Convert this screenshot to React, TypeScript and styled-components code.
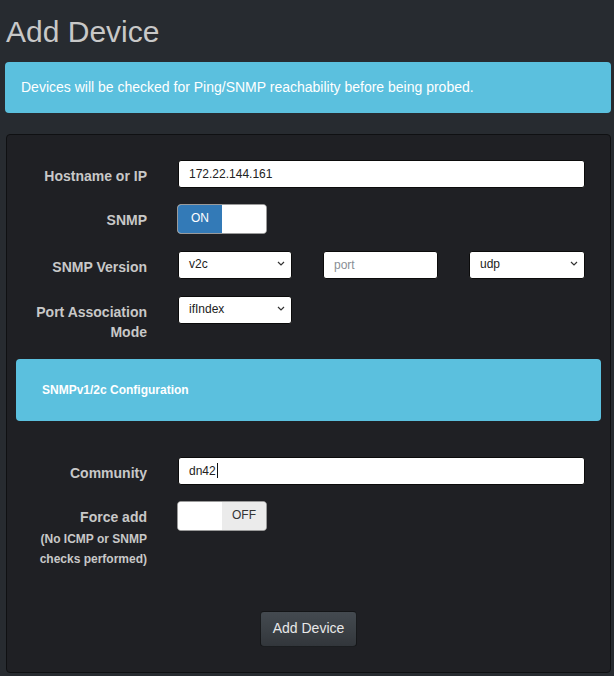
import styled, { createGlobalStyle } from "styled-components";

const GlobalStyle = createGlobalStyle`
  body {
    margin: 0;
    background-color: #272b30;
    font-family: "Liberation Sans", Arial, sans-serif;
    color: #c8c8c8;
  }
`;

const ScPage = styled.div`
  padding: 15px 3px 0 5px;
  width: 606px;
`;

const ScTitle = styled.h1`
  margin: 0 0 14px 1px;
  font-size: 30px;
  line-height: 33px;
  font-weight: normal;
  color: #c8c8c8;
`;

const ScAlert = styled.div`
  margin-bottom: 21px;
  padding: 15px 16px 16px;
  background-color: #5bc0de;
  border-radius: 4px;
  color: #fff;
  font-size: 14px;
  line-height: 20px;
`;

const ScPanel = styled.div`
  margin-left: 1px;
  width: 603px;
  padding: 25px 0;
  background-color: #1f2024;
  border: 1px solid #0f1012;
  border-radius: 4px;
`;

const ScRow = styled.div<{ $space: number }>`
  display: flex;
  align-items: flex-start;
  margin-bottom: ${(p) => p.$space}px;
`;

const ScLabel = styled.div`
  width: 140px;
  padding: 6px 1px 0 0;
  text-align: right;
  font-size: 14px;
  font-weight: bold;
  line-height: 20px;
  color: #c8c8c8;
`;

const ScHint = styled.div`
  margin-top: 2px;
  font-size: 12px;
`;

const ScField = styled.div`
  margin-left: 30px;
  width: 407px;
`;

const ScTriple = styled.div`
  display: grid;
  grid-template-columns: 114px 115px 116px;
  column-gap: 31px;
`;

const ScTextBox = styled.div<{ $muted?: boolean }>`
  display: flex;
  align-items: center;
  box-sizing: border-box;
  height: 28px;
  padding: 0 10px 1px;
  background-color: #fff;
  border: 1px solid #0b0b0b;
  border-radius: 3px;
  font-size: 12px;
  color: ${(p) => (p.$muted ? "#8a8f96" : "#222")};
`;

const ScCaret = styled.span`
  display: inline-block;
  width: 1px;
  height: 15px;
  margin-left: 1px;
  background-color: #111;
`;

const ScSelect = styled(ScTextBox)<{ $width?: number }>`
  justify-content: space-between;
  width: ${(p) => (p.$width ? `${p.$width}px` : "auto")};
  padding-right: 6px;
  padding-bottom: 3px;
`;

const ScToggle = styled.div`
  display: flex;
  box-sizing: border-box;
  width: 90px;
  height: 30px;
  margin-left: -1px;
  border: 1px solid #9a9a9a;
  border-radius: 4px;
  overflow: hidden;
  background-color: #fff;
`;

const ScToggleHalf = styled.div<{ $tone: "on" | "off" | "blank" }>`
  flex: 1;
  display: flex;
  align-items: center;
  justify-content: center;
  padding-bottom: 3px;
  font-size: 12px;
  background-color: ${(p) =>
    p.$tone === "on" ? "#337ab7" : p.$tone === "off" ? "#ebebeb" : "#fff"};
  color: ${(p) => (p.$tone === "on" ? "#fff" : "#333")};
`;

const ScSubPanel = styled.div`
  display: flex;
  align-items: center;
  height: 62px;
  margin: 0 9px 36px;
  padding: 0 26px;
  background-color: #5bc0de;
  border-radius: 4px;
  color: #fff;
  font-size: 12px;
  font-weight: bold;
`;

const ScActions = styled.div`
  display: flex;
  justify-content: center;
`;

const ScButton = styled.button`
  padding: 6px 12px 8px;
  font-family: inherit;
  font-size: 14px;
  line-height: 20px;
  color: #e8e8e8;
  background-image: linear-gradient(#444a50, #3a3f44 60%, #32363b);
  border: 1px solid rgba(0, 0, 0, 0.6);
  border-radius: 4px;
  cursor: pointer;
`;

const Chevron = () => (
  <svg width="8" height="5" viewBox="0 0 8 5">
    <polyline points="1,1 4,4 7,1" fill="none" stroke="#333" strokeWidth="1.2" />
  </svg>
);

const Select = ({ value, width }: { value: string; width?: number }) => (
  <ScSelect $width={width}>
    <span>{value}</span>
    <Chevron />
  </ScSelect>
);

export default function App() {
  return (
    <>
      <GlobalStyle />
      <ScPage>
        <ScTitle>Add Device</ScTitle>
        <ScAlert>
          Devices will be checked for Ping/SNMP reachability before being probed.
        </ScAlert>
        <ScPanel>
          <ScRow $space={16}>
            <ScLabel>Hostname or IP</ScLabel>
            <ScField>
              <ScTextBox>172.22.144.161</ScTextBox>
            </ScField>
          </ScRow>
          <ScRow $space={17}>
            <ScLabel>SNMP</ScLabel>
            <ScField>
              <ScToggle>
                <ScToggleHalf $tone="on">ON</ScToggleHalf>
                <ScToggleHalf $tone="blank" />
              </ScToggle>
            </ScField>
          </ScRow>
          <ScRow $space={17}>
            <ScLabel>SNMP Version</ScLabel>
            <ScField>
              <ScTriple>
                <Select value="v2c" />
                <ScTextBox $muted>port</ScTextBox>
                <Select value="udp" />
              </ScTriple>
            </ScField>
          </ScRow>
          <ScRow $space={17}>
            <ScLabel>
              Port Association
              <br />
              Mode
            </ScLabel>
            <ScField>
              <Select value="ifIndex" width={114} />
            </ScField>
          </ScRow>
          <ScSubPanel>SNMPv1/2c Configuration</ScSubPanel>
          <ScRow $space={16}>
            <ScLabel>Community</ScLabel>
            <ScField>
              <ScTextBox>
                dn42
                <ScCaret />
              </ScTextBox>
            </ScField>
          </ScRow>
          <ScRow $space={42}>
            <ScLabel>
              Force add
              <ScHint>
                (No ICMP or SNMP
                <br />
                checks performed)
              </ScHint>
            </ScLabel>
            <ScField>
              <ScToggle>
                <ScToggleHalf $tone="blank" />
                <ScToggleHalf $tone="off">OFF</ScToggleHalf>
              </ScToggle>
            </ScField>
          </ScRow>
          <ScActions>
            <ScButton>Add Device</ScButton>
          </ScActions>
        </ScPanel>
      </ScPage>
    </>
  );
}
